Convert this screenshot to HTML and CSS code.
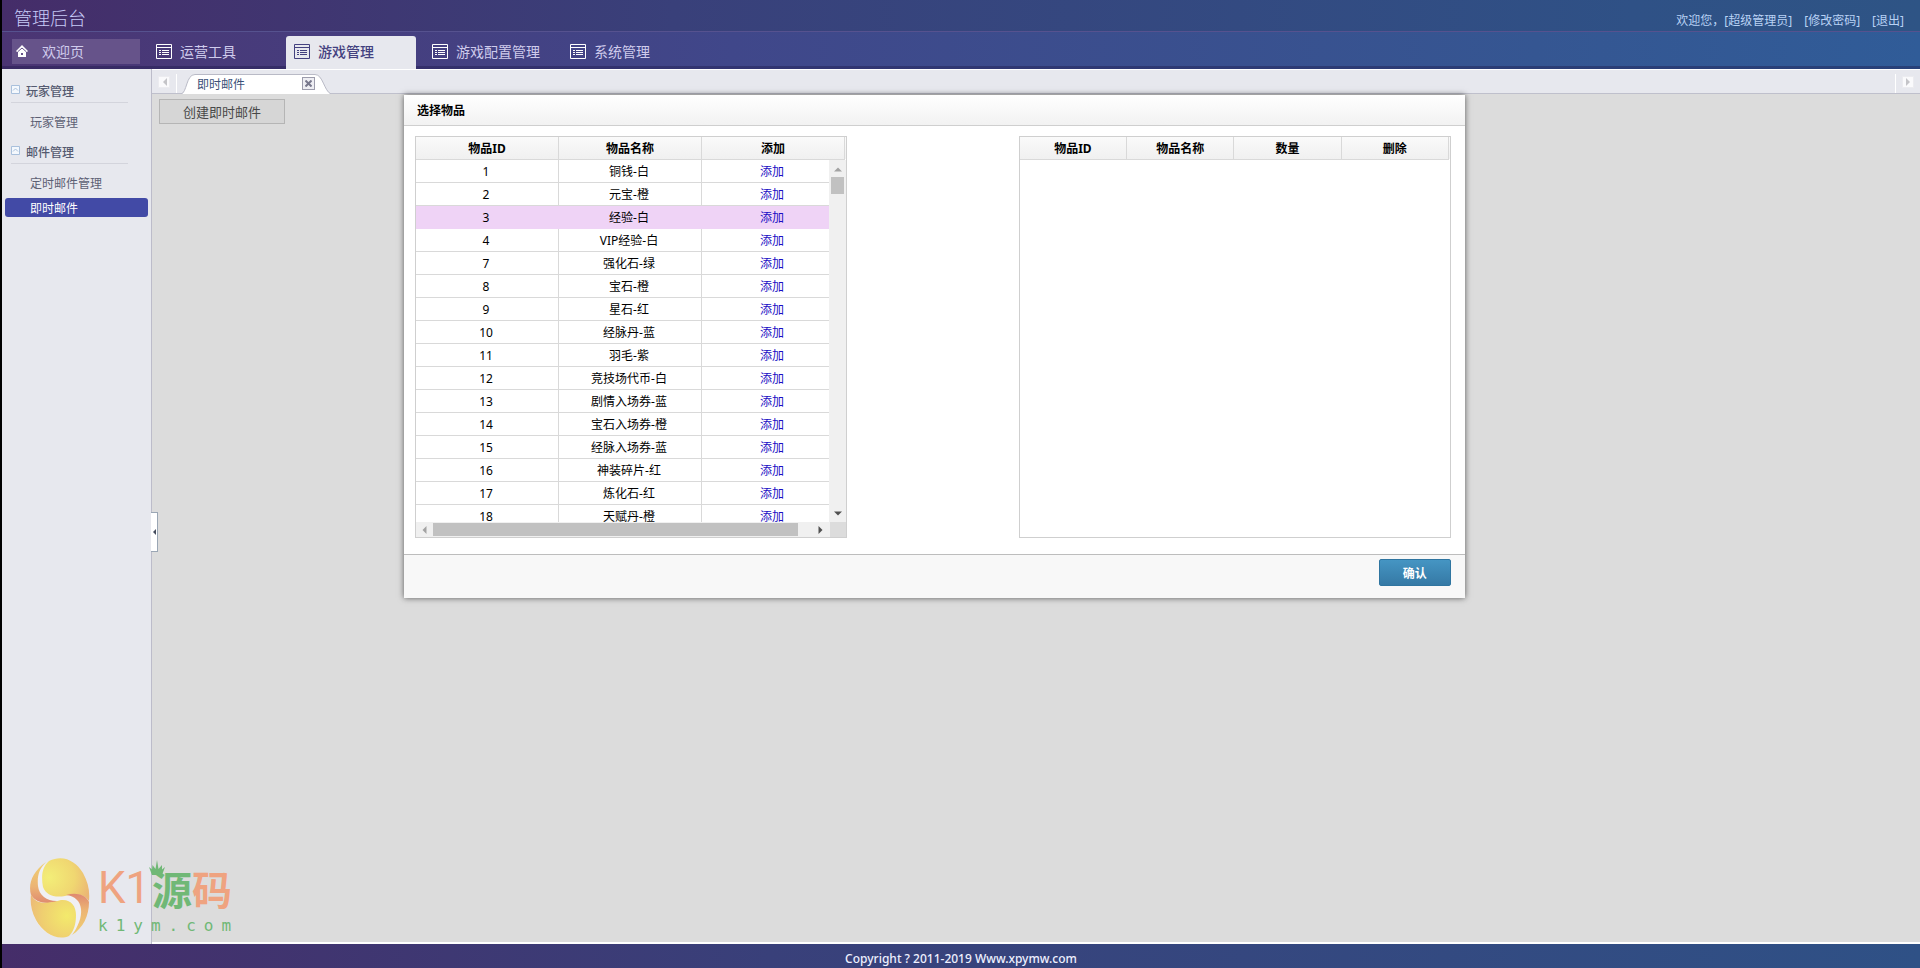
FILE: index.html
```html
<!DOCTYPE html>
<html lang="zh-CN">
<head>
<meta charset="UTF-8">
<meta name="viewport" content="width=device-width, initial-scale=1.0">
<title>管理后台</title>
<link rel="stylesheet" href="styles.css">
</head>
<body>
<svg class="sprite" width="0" height="0">
  <symbol id="icon-list" viewBox="0 0 16 15">
    <path d="M0.5 0.5h15v14h-15zM0 3.5h16" fill="none" stroke="currentColor"/>
    <path d="M3 6h2v1H3zM6 6h7v1H6zM3 8h2v1H3zM6 8h7v1H6zM3 10h2v1H3zM6 10h7v1H6z" fill="currentColor"/>
  </symbol>
  <symbol id="icon-fold" viewBox="0 0 9 9">
    <path d="M0.5 0.5h8v8h-8z" fill="#f4f8fd" stroke="#a9c0dc"/>
    <path d="M2 5.5l2.5-2.5L7 5.5" fill="none" stroke="#a9c0dc"/>
  </symbol>
</svg>

<header class="header">
  <h1>管理后台</h1>
  <div class="user-info">
    <span>欢迎您，<a href="#">[超级管理员]</a></span>
    <a href="#">[修改密码]</a>
    <a href="#">[退出]</a>
  </div>
</header>

<nav class="nav">
  <a class="home" href="#">
    <svg width="12" height="12" viewBox="0 0 12 12"><path d="M6 0L0 6l1 1 1-0.6V12h8V6.4l1 0.6 1-1z" fill="#fff"/><path d="M2 6.5L6 3l4 3.5" fill="none" stroke="#66538a"/><path d="M5 8h2v2H5z" fill="#66538a"/></svg>
    欢迎页
  </a>
  <a class="nav-item" href="#"><svg class="nav-icon"><use href="#icon-list"/></svg>运营工具</a>
  <a class="nav-item active" href="#"><svg class="nav-icon"><use href="#icon-list"/></svg>游戏管理</a>
  <a class="nav-item" href="#"><svg class="nav-icon"><use href="#icon-list"/></svg>游戏配置管理</a>
  <a class="nav-item" href="#"><svg class="nav-icon"><use href="#icon-list"/></svg>系统管理</a>
</nav>

<div class="main">
  <aside class="sidebar">
    <h3><svg class="fold"><use href="#icon-fold"/></svg>玩家管理</h3>
    <ul>
      <li><a href="#">玩家管理</a></li>
    </ul>
    <h3><svg class="fold"><use href="#icon-fold"/></svg>邮件管理</h3>
    <ul>
      <li><a href="#">定时邮件管理</a></li>
      <li><a class="current" href="#">即时邮件</a></li>
    </ul>
  </aside>

  <section class="content">
    <div class="tabs">
      <button class="tab-scroll" aria-label="向左"><svg width="5" height="8" viewBox="0 0 5 8"><path d="M5 0v8L1 4z" fill="#c4c4c8"/></svg></button>
      <div class="tab-list">
        <div class="tab">
          <svg class="tab-edge" viewBox="0 0 16 20"><path d="M0 20C6 19 5 0.5 14 0.5H16V20z" fill="#fff"/><path d="M0 20C6 19 5 0.5 14 0.5H16" fill="none" stroke="#b9bac6"/></svg>
          <div class="tab-text">
            <span>即时邮件</span>
            <button class="tab-close" aria-label="关闭"><svg width="7" height="7" viewBox="0 0 7 7"><path d="M0.5 0.5l6 6M6.5 0.5l-6 6" stroke="#77778c" stroke-width="2"/></svg></button>
          </div>
          <svg class="tab-edge" viewBox="0 0 16 20"><path d="M0 0.5C8 0.5 9 17 16 20H0z" fill="#fff"/><path d="M0 0.5C8 0.5 9 17 16 20" fill="none" stroke="#b9bac6"/></svg>
        </div>
      </div>
      <button class="tab-scroll" aria-label="向右"><svg width="5" height="8" viewBox="0 0 5 8"><path d="M0 0v8l4-4z" fill="#c4c4c8"/></svg></button>
    </div>

    <div class="page">
      <button class="create">创建即时邮件</button>
      <button class="splitter" aria-label="收起"><svg width="3" height="6" viewBox="0 0 3 6"><path d="M3 0v6L0 3z" fill="#444b5c"/></svg></button>

      <div class="dialog" role="dialog" aria-labelledby="dialogTitle">
        <h2 id="dialogTitle">选择物品</h2>
        <div class="dialog-body">
          <div class="grid">
            <table class="items">
              <thead>
                <tr><th>物品ID</th><th>物品名称</th><th>添加</th></tr>
              </thead>
              <tbody>
                <tr><td>1</td><td>铜钱-白</td><td><a href="#">添加</a></td></tr>
                <tr><td>2</td><td>元宝-橙</td><td><a href="#">添加</a></td></tr>
                <tr class="hover"><td>3</td><td>经验-白</td><td><a href="#">添加</a></td></tr>
                <tr><td>4</td><td>VIP经验-白</td><td><a href="#">添加</a></td></tr>
                <tr><td>7</td><td>强化石-绿</td><td><a href="#">添加</a></td></tr>
                <tr><td>8</td><td>宝石-橙</td><td><a href="#">添加</a></td></tr>
                <tr><td>9</td><td>星石-红</td><td><a href="#">添加</a></td></tr>
                <tr><td>10</td><td>经脉丹-蓝</td><td><a href="#">添加</a></td></tr>
                <tr><td>11</td><td>羽毛-紫</td><td><a href="#">添加</a></td></tr>
                <tr><td>12</td><td>竞技场代币-白</td><td><a href="#">添加</a></td></tr>
                <tr><td>13</td><td>剧情入场券-蓝</td><td><a href="#">添加</a></td></tr>
                <tr><td>14</td><td>宝石入场券-橙</td><td><a href="#">添加</a></td></tr>
                <tr><td>15</td><td>经脉入场券-蓝</td><td><a href="#">添加</a></td></tr>
                <tr><td>16</td><td>神装碎片-红</td><td><a href="#">添加</a></td></tr>
                <tr><td>17</td><td>炼化石-红</td><td><a href="#">添加</a></td></tr>
                <tr><td>18</td><td>天赋丹-橙</td><td><a href="#">添加</a></td></tr>
              </tbody>
            </table>
            <div class="scroll-y">
              <svg width="8" height="5" viewBox="0 0 8 5"><path d="M0 4.5h8L4 0.5z" fill="#a3a3a3"/></svg>
              <div class="thumb"></div>
              <svg width="8" height="5" viewBox="0 0 8 5"><path d="M0 0.5h8L4 4.5z" fill="#505050"/></svg>
            </div>
            <div class="scroll-x">
              <svg width="5" height="8" viewBox="0 0 5 8"><path d="M4.5 0v8L0.5 4z" fill="#a3a3a3"/></svg>
              <div class="thumb"></div>
              <svg width="5" height="8" viewBox="0 0 5 8"><path d="M0.5 0v8l4-4z" fill="#505050"/></svg>
            </div>
          </div>
          <div class="grid">
            <table class="selected">
              <thead>
                <tr><th>物品ID</th><th>物品名称</th><th>数量</th><th>删除</th></tr>
              </thead>
            </table>
          </div>
        </div>
        <div class="dialog-footer">
          <button class="confirm">确认</button>
        </div>
      </div>
    </div>
  </section>
</div>

<footer class="footer">Copyright ? 2011-2019 Www.xpymw.com</footer>

<div class="watermark">
  <svg width="60" height="80" viewBox="0 0 60 80">
    <defs>
      <radialGradient id="gold1" cx="0.15" cy="0.45" r="0.9"><stop offset="0" stop-color="#f3ee78"/><stop offset="0.6" stop-color="#f0d771"/><stop offset="1" stop-color="#ebb774"/></radialGradient>
      <radialGradient id="gold2" cx="0.8" cy="0.5" r="0.9"><stop offset="0" stop-color="#f3ea6c"/><stop offset="0.6" stop-color="#efcf70"/><stop offset="1" stop-color="#ecb878"/></radialGradient>
      <linearGradient id="edge1" x1="0" y1="0" x2="0" y2="1"><stop offset="0" stop-color="#f0d071"/><stop offset="0.6" stop-color="#ecb474"/><stop offset="1" stop-color="#df8a70"/></linearGradient>
      <linearGradient id="edge2" x1="0" y1="0" x2="0" y2="1"><stop offset="0" stop-color="#df8a70"/><stop offset="0.4" stop-color="#ecb474"/><stop offset="1" stop-color="#f0d071"/></linearGradient>
    </defs>
    <ellipse cx="29.500" cy="40" rx="29" ry="39" fill="#f0f0f3"/>
    <path d="M19 3C33-4 46 3 53 15C58 24 60 33 59 43C53 35 45 36 35 38C24 40 16 37 13 29C11 18 12 9 19 3z" fill="url(#gold1)"/>
    <path d="M16 4C2 14-2 26 1 37C6 45 17 47 29 43C18 44 9 38 8 28C7 18 9 11 16 4z" fill="url(#edge1)"/>
    <path d="M1 36C5 47 17 46 31 42C41 41 46 48 46 57C46 66 44 73 39 78C27 83 13 75 6 62C1 53 0 44 1 36z" fill="url(#gold2)"/>
    <path d="M36 37C47 34 56 37 59 44C59 58 53 70 42 77C48 69 52 59 51 51C50 43 45 38 36 37z" fill="url(#edge2)"/>
  </svg>
  <div class="brand">
    <div class="brand-name"><span class="k1">K1</span><span class="green">源</span><span>码</span></div>
    <div class="brand-url">k1ym.com</div>
  </div>
  <svg class="crown" width="16" height="16" viewBox="0 0 16 16"><path d="M3 15L0 7l3 2.500L3.500 5 6.500 9 8 0l1.500 9 3.500-4 0 4.500L16 7l-3 8z" fill="#70b876"/></svg>
</div>
</body>
</html>
```
FILE: styles.css
```css
* {
  box-sizing: border-box;
}
body {
  margin: 0;
  min-height: 100vh;
  display: flex;
  flex-direction: column;
  position: relative;
  border-left: 2px solid #000;
  background: #fff;
  font-family: "Noto Sans", "Noto Sans CJK SC", sans-serif;
  font-size: 12px;
  color: #000;
}
a {
  text-decoration: none;
  color: inherit;
}
button {
  font-family: inherit;
  padding: 0;
  cursor: pointer;
}
.sprite {
  position: absolute;
}

/* top */
.header {
  height: 31px;
  display: flex;
  justify-content: space-between;
  align-items: center;
  padding: 4px 16px 0 12px;
  background: linear-gradient(90deg, #452d69, #39407a 35%, #2f5186 85%, #2e5485);
  color: #c8ccf8;
}
.header h1 {
  margin: 0;
  font-size: 18px;
  line-height: 24px;
  font-weight: 300;
}
.user-info {
  display: flex;
  gap: 12px;
  padding-top: 4px;
  color: #b9d2f5;
}
.nav {
  height: 38px;
  display: flex;
  align-items: flex-end;
  gap: 8px;
  padding-left: 10px;
  border-top: 1px solid #56528f;
  box-shadow: inset 0 -3px 0 rgba(30, 25, 75, 0.4);
  background: linear-gradient(90deg, #4b3573, #40478a 38%, #355692 80%, #305c98);
  font-size: 14px;
  color: #cfcbec;
}
.home {
  display: flex;
  align-items: center;
  gap: 14px;
  width: 128px;
  height: 25px;
  margin-bottom: 5px;
  padding: 0 0 2px 4px;
  background: #66538a;
}
.nav-item {
  display: flex;
  align-items: center;
  gap: 8px;
  width: 130px;
  height: 33px;
  padding: 0 0 3px 8px;
}
.nav-icon {
  width: 16px;
  height: 15px;
  color: #fff;
}
.nav-item.active {
  border-radius: 3px 3px 0 0;
  background: #e7e8ee;
  color: #43417f;
  font-weight: 500;
}
.active .nav-icon {
  color: #43417f;
}

.main {
  flex: 1;
  display: flex;
}
.sidebar {
  width: 150px;
  padding: 11px 3px 0;
  border-right: 1px solid #bcbcca;
  background: #e7e8ee;
  color: #5d6074;
}
.sidebar h3 {
  display: flex;
  align-items: center;
  gap: 6px;
  height: 23px;
  margin: 0 20px 9px 6px;
  border-bottom: 1px solid #d3d4dc;
  font-size: 12px;
  font-weight: 500;
  color: #555a70;
}
.fold {
  width: 9px;
  height: 9px;
  margin-bottom: 4px;
}
.sidebar ul {
  list-style: none;
  margin: 0;
  padding: 0 0 4px;
}
.sidebar li {
  padding-bottom: 5px;
  margin-bottom: 1px;
}
.sidebar li a {
  display: block;
  height: 19px;
  padding-left: 25px;
  line-height: 21px;
  border-radius: 3px;
}
.sidebar li a.current {
  background: #424aa6;
  color: #fff;
}

/* tabs */
.content {
  flex: 1;
  display: flex;
  flex-direction: column;
  padding-bottom: 2px;
}
.tabs {
  display: flex;
  align-items: center;
  height: 25px;
  padding: 0 6px;
  border-top: 1px solid #fff;
  border-bottom: 1px solid #bfc0cc;
  background: #e7e8ee;
}
.tab-scroll {
  display: flex;
  align-items: center;
  justify-content: center;
  width: 12px;
  height: 12px;
  border: 1px solid #ececf0;
  background: #fafafc;
}
.tab-list {
  flex: 1;
  height: 19px;
  margin: 4px 6px 0;
  padding-left: 4px;
  border-left: 1px solid #fff;
  border-right: 1px solid #fff;
}
.tab {
  display: flex;
}
.tab-edge {
  width: 16px;
  height: 20px;
}
.tab-text {
  display: flex;
  justify-content: space-between;
  align-items: center;
  width: 118px;
  height: 20px;
  padding-bottom: 2px;
  border-top: 1px solid #b9bac6;
  background: #fff;
  color: #3b5178;
}
.tab-close {
  display: flex;
  align-items: center;
  justify-content: center;
  width: 13px;
  height: 13px;
  border: 1px solid #9c9cac;
  background: #eeeef3;
}

/* page */
.page {
  flex: 1;
  position: relative;
  padding: 5px 7px;
  background: #dcdcdc;
}
.create {
  display: block;
  width: 126px;
  height: 25px;
  padding-bottom: 1px;
  border: 1px solid #b5b5b5;
  background: #d6d6d6;
  font-size: 13px;
  color: #484848;
}
.splitter {
  position: absolute;
  left: -1px;
  top: 418px;
  width: 7px;
  height: 40px;
  border: 1px solid #9aa6b4;
  border-left: 0;
  background: #fff;
}
.splitter svg {
  display: block;
  margin: auto;
}
.dialog {
  position: absolute;
  left: 252px;
  top: 1px;
  width: 60%;
  background: #fff;
  box-shadow: 0 0 6px rgba(0, 0, 0, 0.6);
}
.dialog h2 {
  margin: 0;
  height: 31px;
  padding-left: 13px;
  border-bottom: 1px solid #cfcfcf;
  background: linear-gradient(#fff, #f2f2f2);
  font-size: 12px;
  line-height: 31px;
  font-weight: bold;
}
.dialog-body {
  display: flex;
  justify-content: space-between;
  padding: 10px 14px 16px 11px;
}
.grid {
  position: relative;
  width: 432px;
  height: 402px;
  overflow: hidden;
  border: 1px solid #cfcfcf;
  background: linear-gradient(#fafafa, #f0f0f0) no-repeat;
  background-size: 100% 22px;
}
table {
  width: 429px;
  table-layout: fixed;
  border-collapse: separate;
  border-spacing: 0;
}
th, td {
  height: 23px;
  padding: 0;
  border-right: 1px solid #d9d9d9;
  border-bottom: 1px solid #d9d9d9;
  line-height: 20px;
  text-align: center;
}
th {
  padding-top: 2px;
}
td {
  padding: 2px 2px 0 0;
  background: #fff;
}
.hover td {
  background: #efd3f6;
  border-color: #efd3f6;
}
td a {
  color: #1a0dc4;
}
.scroll-y, .scroll-x {
  position: absolute;
  display: flex;
  align-items: center;
  background: #f0f0f0;
}
.scroll-y {
  right: 0;
  top: 23px;
  bottom: 15px;
  width: 17px;
  flex-direction: column;
  padding: 7px 0 6px;
}
.scroll-x {
  left: 0;
  right: 0;
  bottom: 0;
  height: 15px;
  padding: 0 23px 0 6px;
  background: linear-gradient(90deg, #f0f0f0 414px, #dcdcdc 414px);
}
.thumb {
  background: #c1c1c1;
}
.scroll-y .thumb {
  width: 13px;
  height: 17px;
  margin: 5px 0 auto;
}
.scroll-x .thumb {
  width: 365px;
  height: 13px;
  margin: 0 auto 0 6px;
}
.dialog-footer {
  display: flex;
  justify-content: flex-end;
  height: 44px;
  padding: 4px 14px;
  border-top: 1px solid #bdbdbd;
  background: #f8f8f8;
}
.confirm {
  width: 72px;
  height: 27px;
  border: 1px solid #2f75a0;
  border-radius: 2px;
  background: linear-gradient(#4595c3, #3579a5);
  font-size: 12px;
  font-weight: bold;
  color: #fff;
}

.footer {
  height: 24px;
  padding-top: 3px;
  background: linear-gradient(90deg, #452d69, #39407a 40%, #2f5186);
  font-size: 12px;
  font-weight: 500;
  line-height: 24px;
  text-align: center;
  color: #eef0ff;
}

/* site mark */
.watermark {
  position: absolute;
  left: 28px;
  bottom: 30px;
  display: flex;
  gap: 8px;
  color: #efa380;
}
.brand-name {
  display: flex;
  align-items: center;
  height: 60px;
  font-family: "Noto Sans CJK SC", sans-serif;
  font-size: 40px;
  line-height: 48px;
  font-weight: bold;
}
.k1 {
  width: 54px;
  font-family: "Roboto", sans-serif;
  font-size: 44px;
  font-weight: 400;
}
.green, .brand-url {
  color: #70b876;
}
.brand-url {
  font-family: "DejaVu Sans Mono", monospace;
  font-size: 16px;
  line-height: 16px;
  letter-spacing: 8px;
}
.crown {
  position: absolute;
  left: 119px;
  top: 2px;
}
```
